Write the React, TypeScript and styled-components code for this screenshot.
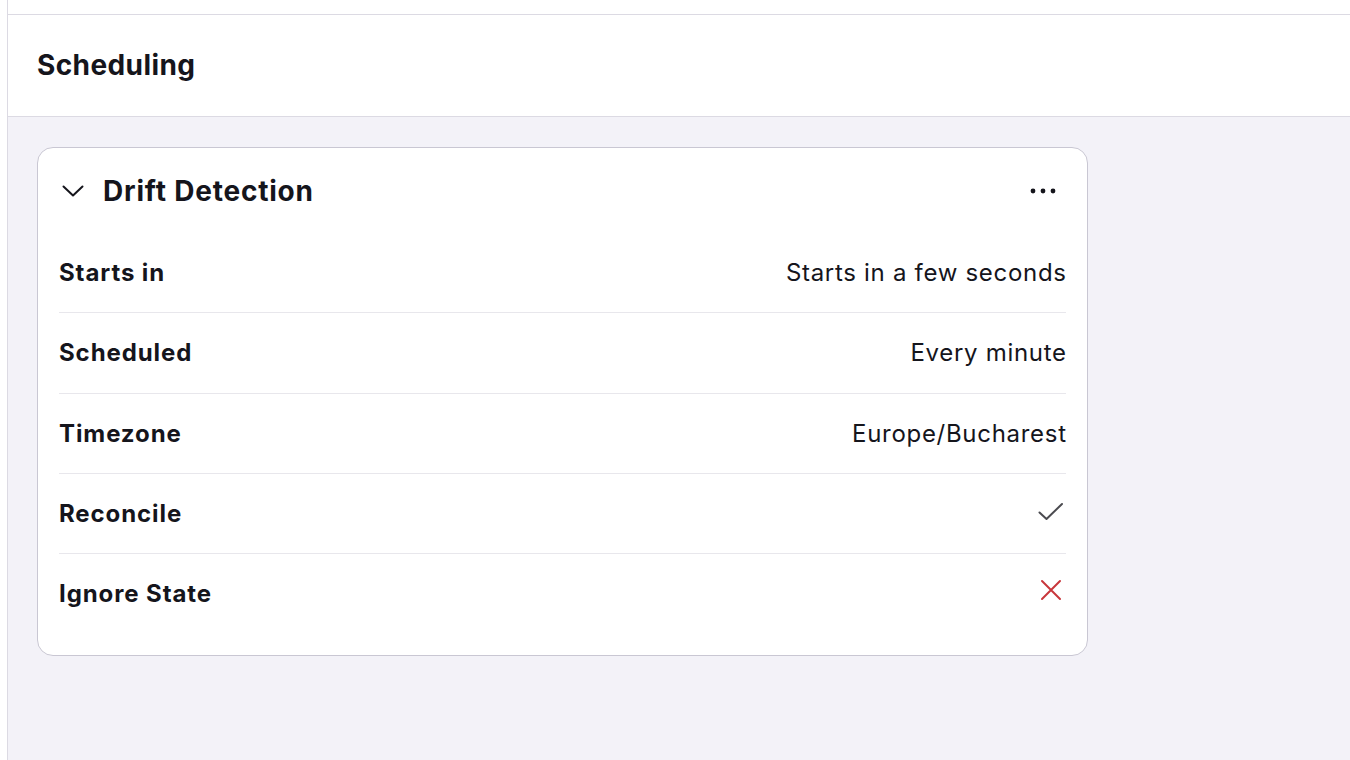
import React from "react";
import styled, { createGlobalStyle } from "styled-components";

const Global = createGlobalStyle`
  html, body { margin: 0; padding: 0; background: #ffffff; }
  body { font-family: Inter, Lato, sans-serif; color: #15151c; }
  * { box-sizing: border-box; }
`;

const Frame = styled.div`
  margin-left: 7px;
  border-left: 1px solid #dcdae3;
  min-height: 760px;
  display: flex;
  flex-direction: column;
  background: #f3f2f8;
`;

const TopStrip = styled.div`
  height: 15px;
  background: #ffffff;
  border-bottom: 1px solid #dcdae3;
`;

const PageHeader = styled.header`
  height: 102px;
  background: #ffffff;
  border-bottom: 1px solid #dcdae3;
  display: flex;
  align-items: center;
  padding-left: 29px;
  padding-bottom: 2px;
`;

const PageTitle = styled.h1`
  margin: 0;
  font-size: 28px;
  font-weight: 700;
  letter-spacing: 0.4px;
  color: #15151c;
`;

const Content = styled.main`
  padding: 30px 29px;
`;

const Card = styled.section`
  width: 1051px;
  background: #ffffff;
  border: 1px solid #c9c7d3;
  border-radius: 16px;
  padding: 0 21px 21px 21px;
`;

const CardHeader = styled.div`
  height: 85px;
  display: flex;
  align-items: center;
  padding-left: 3px;
`;

const CardTitle = styled.h2`
  margin: 0 0 0 19px;
  font-size: 28px;
  font-weight: 700;
  letter-spacing: 0.8px;
  flex: 1;
  color: #15151c;
`;

const IconButton = styled.button`
  border: 0;
  background: transparent;
  padding: 0;
  margin-right: 10px;
  display: flex;
  align-items: center;
  justify-content: center;
  cursor: pointer;
`;

const Row = styled.div<{ $last?: boolean; $h: number }>`
  height: ${(p) => p.$h}px;
  display: flex;
  align-items: center;
  justify-content: space-between;
  border-bottom: ${(p) => (p.$last ? "none" : "1px solid #e8e7ec")};
  padding-bottom: 1px;
`;

const Label = styled.span`
  font-size: 24px;
  font-weight: 700;
  letter-spacing: 0.9px;
  color: #15151c;
`;

const Value = styled.span`
  font-size: 24px;
  font-weight: 400;
  letter-spacing: 0.7px;
  margin-right: -0.7px;
  color: #15151c;
  display: flex;
  align-items: center;
`;

const IconValue = styled.span<{ $shift: number; $lift: number }>`
  display: flex;
  margin-right: ${(p) => p.$shift}px;
  margin-top: -${(p) => p.$lift}px;
`;

const Chevron = () => (
  <svg width="22" height="14" viewBox="0 0 22 14" fill="none">
    <path d="M1.5 2.5 L11 11.5 L20.5 2.5" stroke="#15151c" strokeWidth="2" strokeLinecap="round" strokeLinejoin="round" />
  </svg>
);

const Dots = () => (
  <svg width="26" height="6" viewBox="0 0 26 6">
    <circle cx="3" cy="3" r="2.4" fill="#15151c" />
    <circle cx="13" cy="3" r="2.4" fill="#15151c" />
    <circle cx="23" cy="3" r="2.4" fill="#15151c" />
  </svg>
);

const Check = () => (
  <svg width="26" height="20" viewBox="0 0 26 20" fill="none">
    <path d="M1.5 10.5 L8.5 17 L24 2" stroke="#4b4b50" strokeWidth="2" strokeLinecap="round" strokeLinejoin="round" />
  </svg>
);

const Cross = () => (
  <svg width="22" height="22" viewBox="0 0 22 22" fill="none">
    <path d="M2 2 L20 20 M20 2 L2 20" stroke="#c8363b" strokeWidth="2" strokeLinecap="round" />
  </svg>
);

const rows: { label: string; value: React.ReactNode; h: number }[] = [
  { label: "Starts in", value: "Starts in a few seconds", h: 80 },
  { label: "Scheduled", value: "Every minute", h: 81 },
  { label: "Timezone", value: "Europe/Bucharest", h: 80 },
  { label: "Reconcile", value: <Check />, h: 80 },
  { label: "Ignore State", value: <Cross />, h: 80 },
];

export default function App() {
  return (
    <>
      <Global />
      <Frame>
        <TopStrip />
        <PageHeader>
          <PageTitle>Scheduling</PageTitle>
        </PageHeader>
        <Content>
          <Card>
            <CardHeader>
              <Chevron />
              <CardTitle>Drift Detection</CardTitle>
              <IconButton aria-label="More">
                <Dots />
              </IconButton>
            </CardHeader>
            {rows.map((r, i) => (
              <Row key={r.label} $h={r.h} $last={i === rows.length - 1}>
                <Label>{r.label}</Label>
                <Value>
                  {typeof r.value === "string" ? (
                    r.value
                  ) : (
                    <IconValue $shift={i === 3 ? 3 : 5} $lift={i === 3 ? 3 : 7}>
                      {r.value}
                    </IconValue>
                  )}
                </Value>
              </Row>
            ))}
          </Card>
        </Content>
      </Frame>
    </>
  );
}
